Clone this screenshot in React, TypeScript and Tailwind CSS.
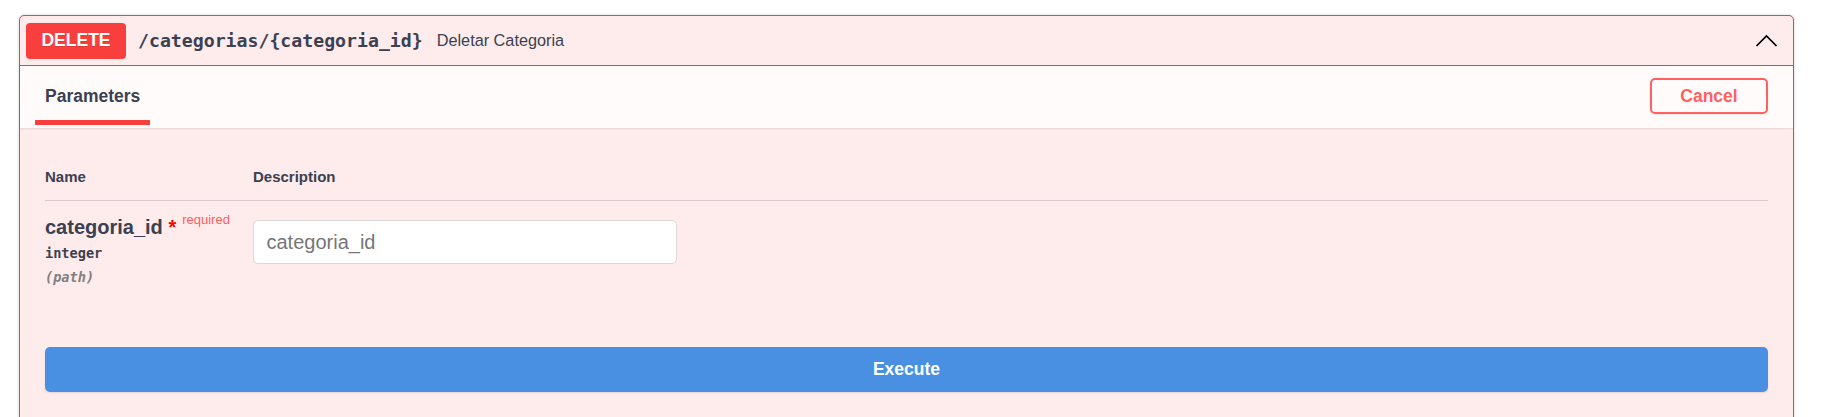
export default function App() {
  return (
    <div className="min-h-[417px] bg-white pt-[15px] pl-[19px] font-['Liberation_Sans',Arial,sans-serif] text-[#3b4151]">
      <div className="w-[1775px] rounded-[5px] border border-[#f93e3e] bg-[#feebeb] pb-[60px] shadow-[0_0_3px_rgba(0,0,0,0.19)]">
        <div className="flex h-[50px] items-center border-b border-[#f93e3e] pl-[6px] pr-[15px]">
          <div className="flex h-[36px] w-[100px] items-center justify-center rounded-[4px] bg-[#f93e3e] text-[17.5px] font-bold text-white [text-shadow:0_1px_0_rgba(0,0,0,0.1)]">
            DELETE
          </div>
          <span className="ml-[12px] font-['DejaVu_Sans_Mono',monospace] text-[18.2px] font-bold">
            /categorias/{"{"}categoria_id{"}"}
          </span>
          <span className="ml-[14px] text-[16.25px]">Deletar Categoria</span>
          <svg className="ml-auto" width="23" height="13" viewBox="0 0 23 13" fill="none">
            <polyline points="1.5,12 11.5,2 21.5,12" stroke="#000" strokeWidth="1.7" />
          </svg>
        </div>

        <div className="relative z-10 flex h-[62px] justify-between bg-white/80 px-[25px] shadow-[0_1px_2px_rgba(0,0,0,0.1)]">
          <div className="flex flex-col pt-[20px]">
            <span className="text-[17.5px] font-bold leading-[20px]">Parameters</span>
            <div className="-ml-[10px] mt-[14px] h-[5px] w-[115px] bg-[#f93e3e]" />
          </div>
          <button className="mt-[12px] flex h-[36px] w-[118px] items-center justify-center rounded-[5px] border-2 border-[#ff6060] text-[17.5px] font-bold text-[#ff6060] shadow-[0_1px_2px_rgba(0,0,0,0.1)]">
            Cancel
          </button>
        </div>

        <div className="px-[25px] pt-[25px]">
          <div className="flex border-b border-[#3b4151]/20 py-[15px] text-[15px] font-bold leading-[17px]">
            <div className="w-[208px]">Name</div>
            <div>Description</div>
          </div>
          <div className="flex">
            <div className="w-[208px] pt-[14px]">
              <div className="flex items-start text-[20px] font-bold leading-[24px]">
                <span>categoria_id</span>
                <span className="text-[#ff0000]">{"\u00a0"}*</span>
                <span className="-mt-[3px] pl-[6px] text-[13px] font-normal leading-[15px] text-[#ff5e5e]">required</span>
              </div>
              <div className="mt-[6px] font-['DejaVu_Sans_Mono',monospace] text-[13.6px] font-bold leading-[16px]">
                integer
              </div>
              <div className="mt-[8px] font-['DejaVu_Sans_Mono',monospace] text-[13.6px] font-bold italic leading-[16px] text-[#808080]">
                (path)
              </div>
            </div>
            <div className="pt-[19px]">
              <input
                type="text"
                placeholder="categoria_id"
                className="h-[44px] w-[424px] rounded-[5px] border border-[#d9d9d9] bg-white px-[12.5px] font-['Liberation_Sans',Arial,sans-serif] text-[20px] text-[#3b4151] outline-none placeholder:text-[#767676]"
              />
            </div>
          </div>
          <button className="mt-[62px] flex h-[45px] w-full items-center justify-center rounded-[5px] bg-[#4990e2] text-[17.5px] font-bold text-white shadow-[0_1px_2px_rgba(0,0,0,0.1)]">
            Execute
          </button>
        </div>
      </div>
    </div>
  );
}
